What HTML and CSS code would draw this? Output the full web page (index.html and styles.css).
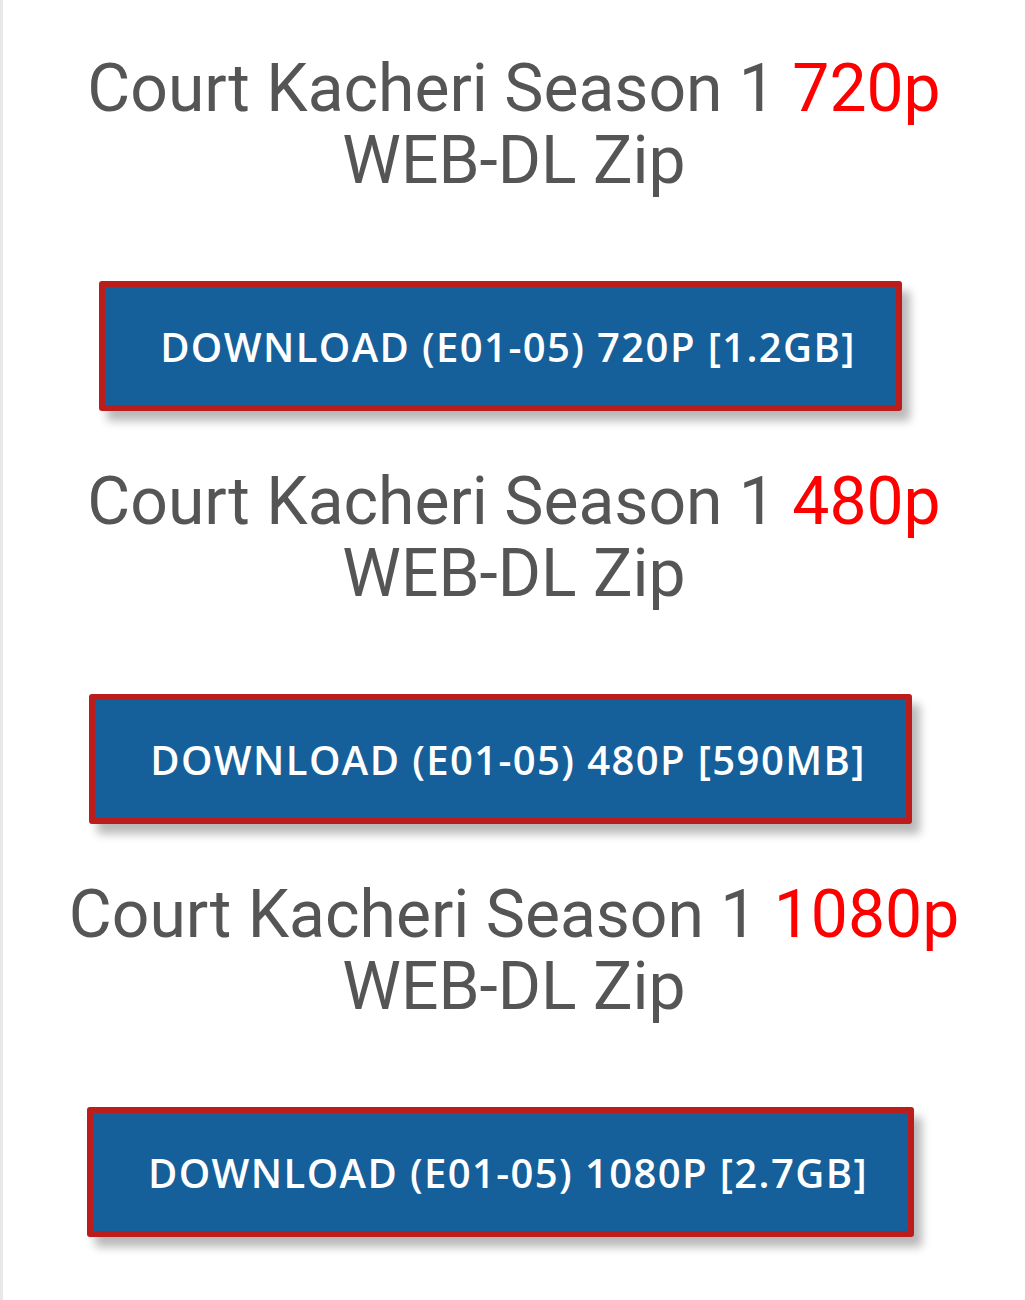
FILE: index.html
```html
<!DOCTYPE html>
<html>
<head>
<meta charset="utf-8">
<link rel="stylesheet" href="styles.css">
</head>
<body>
<main class="page">
  <section class="item">
    <h2 class="title">Court Kacheri Season 1 <span class="res">720p</span> WEB-DL Zip</h2>
    <div class="btn-row"><a class="btn" href="#">DOWNLOAD (E01-05) 720P [1.2GB]</a></div>
  </section>
  <section class="item">
    <h2 class="title">Court Kacheri Season 1 <span class="res">480p</span> WEB-DL Zip</h2>
    <div class="btn-row"><a class="btn" href="#">DOWNLOAD (E01-05) 480P [590MB]</a></div>
  </section>
  <section class="item">
    <h2 class="title">Court Kacheri Season 1 <span class="res">1080p</span> WEB-DL Zip</h2>
    <div class="btn-row"><a class="btn" href="#">DOWNLOAD (E01-05) 1080P [2.7GB]</a></div>
  </section>
</main>
</body>
</html>
```
FILE: styles.css
```css
html, body {
  margin: 0;
  padding: 0;
  background: #fff;
}
.page {
  border-left: 3px solid #e8e8e8;
  min-height: 1300px;
  box-sizing: border-box;
}
.item {
  padding-top: 53px;
  display: flex;
  flex-direction: column;
  align-items: center;
}
.item + .item {
  padding-top: 55px;
}
.title {
  margin: 0;
  max-width: 920px;
  font-family: Roboto, "Liberation Sans", sans-serif;
  font-weight: 400;
  font-size: 66px;
  line-height: 72px;
  color: #555;
  text-align: center;
}
.res {
  color: #ff0000;
}
.btn-row {
  margin-top: 84px;
  display: flex;
  justify-content: center;
  width: 100%;
  padding-right: 27px;
  box-sizing: border-box;
}
.btn {
  display: flex;
  align-items: center;
  height: 118px;
  padding: 0 40px 0 55px;
  background: #155f9a;
  border: 6px solid #bb1c1c;
  border-radius: 3px;
  box-shadow: 8px 10px 10px rgba(0, 0, 0, 0.28);
  color: #fff;
  text-decoration: none;
  font-family: "Open Sans", sans-serif;
  font-weight: 600;
  font-size: 40px;
  letter-spacing: 1.4px;
  white-space: nowrap;
}
```
